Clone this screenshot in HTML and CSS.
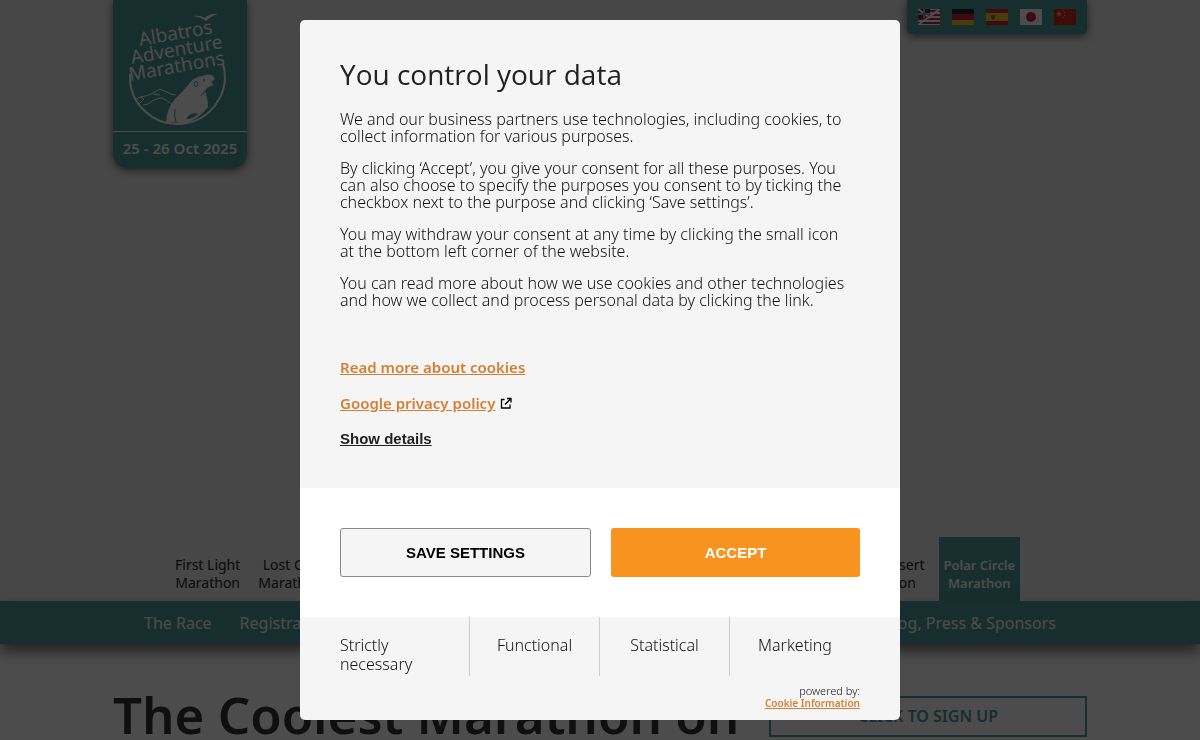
FILE: index.html
```
<!DOCTYPE html>
<html lang="en">
<head>
    <meta charset="UTF-8">
    <title>Polar Circle Marathon</title>
    <link rel="stylesheet" href="styles.css">
</head>
<body>

<header class="hero">
    <div class="top">
        <a class="logo" href="#">
            <svg class="logo-mark" viewBox="0 0 134 131" role="img" aria-label="Albatros Adventure Marathons">
                <path d="M80 16 q8 -1 12 2 q5 -5 13 -4 q-7 2 -12 7 q-5 -4 -13 -5z" fill="#fff"/>
                <path d="M17 74 A47.4 47.4 0 1 0 110 64" fill="none" stroke="#fff" stroke-width="2"/>
                <path d="M22 100 l5 -3 l4 2 l-5 5 z M27 97 q7 -1 11 -3 l9 -5 q7 3 11 5 l5 1 M30 105 q6 0 9 -4 q7 -3 10 -3 q4 2 10 6 M40 94 l7 1" fill="none" stroke="#fff" stroke-width="1"/>
                <path d="M53 122 C54 113 56 106 62 99 C68 93 72 89 75 85 C79 79 85 76 90 76 C94 74 98 75 100 76 L102 79 L98 82 L101 85 C97 86 94 87 92 91 C94 96 95 102 95 107 C88 116 80 121 72 123z" fill="#fff"/>
                <path d="M62 109 q-1 7 1 13 M92 91 l-4 5" fill="none" stroke="#4a9b98" stroke-width="1"/>
                <path d="M73 119 q5 -8 12 -5 q-5 5 -12 5z" fill="#4a9b98"/>
                <ellipse cx="83" cy="84" rx="2" ry="2.5" fill="none" stroke="#4a9b98"/>
                <circle cx="91" cy="80" r="1" fill="#4a9b98"/>
                <g class="logo-text">
                    <text x="27" y="46" transform="rotate(-10 27 46)">Albatros</text>
                    <text x="19" y="64" transform="rotate(-10 19 64)">Adventure</text>
                    <text x="17" y="81" transform="rotate(-10 17 81)">Marathons</text>
                </g>
            </svg>
            <span class="logo-date">25 - 26 Oct 2025</span>
        </a>
        <div class="languages">
            <a href="#" aria-label="English">
                <svg viewBox="0 0 22 16"><path fill="#fff" d="M0 0h22v16H0z"/><path d="M11 2h11M11 6h11M0 10h22M0 14h22" stroke="#c8283c" stroke-width="2"/><path fill="#26397c" d="M0 0h12v9H0z"/><path d="M0 0l12 9M0 16L22 0M6 0v9M0 5h12" stroke="#fff" stroke-width="2"/><path d="M6 0v9M0 5h12" stroke="#c8283c"/></svg>
            </a>
            <a href="#" aria-label="Deutsch">
                <svg viewBox="0 0 22 16"><path fill="#222" d="M0 0h22v6H0z"/><path fill="#d8202c" d="M0 5h22v6H0z"/><path fill="#f5c92b" d="M0 11h22v5H0z"/></svg>
            </a>
            <a href="#" aria-label="Español">
                <svg viewBox="0 0 22 16"><path fill="#cf2630" d="M0 0h22v16H0z"/><path fill="#f5c92b" d="M0 4h22v8H0z"/><path fill="#b5502c" d="M5 6h4v3l-2 2-2-2z"/></svg>
            </a>
            <a href="#" aria-label="日本語">
                <svg viewBox="0 0 22 16"><path fill="#fff" d="M0 0h22v16H0z"/><circle cx="11" cy="8" r="5" fill="#d41f3a"/></svg>
            </a>
            <a href="#" aria-label="中文">
                <svg viewBox="0 0 22 16"><path fill="#d8261f" d="M0 0h22v16H0z"/><path fill="#f5d32b" d="M5 2l1 2h2L6 5l1 3-2-2-2 2 1-3-2-1h2z"/><path fill="#f5d32b" d="M9 1h1v1H9zM10 3h1v1h-1zM10 6h1v1h-1zM9 8h1v1H9z"/></svg>
            </a>
        </div>
    </div>
    <nav class="events">
        <div class="group">
            <a href="#">First Light<br>Marathon</a>
            <a href="#">Lost City<br>Marathon</a>
        </div>
        <div class="group">
            <a href="#">Petra Desert<br>Marathon</a>
            <a class="active" href="#">Polar Circle<br>Marathon</a>
        </div>
    </nav>
</header>

<nav class="menu">
    <div class="group">
        <a href="#">The Race</a>
        <a href="#">Registration</a>
    </div>
    <div class="group">
        <a href="#">Blog, Press &amp; Sponsors</a>
    </div>
</nav>

<main class="content">
    <h1>The Coolest Marathon on</h1>
    <a class="signup" href="#">CLICK TO SIGN UP</a>
</main>

<div class="overlay">
    <div class="dialog" role="dialog" aria-labelledby="dialogTitle">
        <div class="dialog-body">
            <h2 id="dialogTitle">You control your data</h2>
            <p>We and our business partners use technologies, including cookies, to<br>collect information for various purposes.</p>
            <p>By clicking ‘Accept’, you give your consent for all these purposes. You<br>can also choose to specify the purposes you consent to by ticking the<br>checkbox next to the purpose and clicking ‘Save settings’.</p>
            <p>You may withdraw your consent at any time by clicking the small icon<br>at the bottom left corner of the website.</p>
            <p>You can read more about how we use cookies and other technologies<br>and how we collect and process personal data by clicking the link.</p>
            <div class="links">
                <a href="#">Read more about cookies</a>
                <div class="external-link">
                    <a href="#">Google privacy policy</a>
                    <svg class="external" viewBox="0 0 12 12" fill="none" stroke="#000" stroke-width="1.3"><path d="M4.5 2.5H1.5v8.500h8.500V7.500M7 1.500h4v4M11 1.500L5 7.500"/></svg>
                </div>
                <button class="details">Show details</button>
            </div>
        </div>
        <div class="actions">
            <button class="save">SAVE SETTINGS</button>
            <button class="accept">ACCEPT</button>
        </div>
        <div class="dialog-footer">
            <div class="categories">
                <div>Strictly necessary</div>
                <div>Functional</div>
                <div>Statistical</div>
                <div>Marketing</div>
            </div>
            <div class="powered">
                powered by:
                <a href="#">Cookie Information</a>
            </div>
        </div>
    </div>
</div>

</body>
</html>
```
FILE: styles.css
```
* {
    box-sizing: border-box;
}

body {
    font-family: "Noto Sans", "Open Sans", sans-serif;
    background: #fff;
    margin: 0;
    height: 100vh;
    overflow: hidden;
}

a {
    color: inherit;
    text-decoration: none;
}

button {
    cursor: pointer;
}

.hero {
    background: #ededed;
    height: 601px;
    padding: 0 113px;
    display: flex;
    flex-direction: column;
    justify-content: space-between;
}

.top {
    display: flex;
    justify-content: space-between;
    align-items: flex-start;
}

.logo {
    width: 134px;
    background: #4a9b98;
    border-radius: 0 0 15px 15px;
    box-shadow: 0 2px 8px rgba(0,0,0,0.6);
    color: white;
    text-align: center;
}

.logo-mark {
    display: block;
    width: 100%;
}

.logo-text {
    font-size: 19px;
    fill: white;
}

.logo-date {
    display: block;
    border-top: 1px solid white;
    padding: 5px 0 8px;
    font-size: 15px;
    font-weight: 600;
    line-height: 23px;
    white-space: nowrap;
}

.languages {
    display: flex;
    gap: 12px;
    padding: 9px 11px;
    background: #4a9b98;
    border-radius: 0 0 5px 5px;
    box-shadow: 0 2px 8px rgba(0,0,0,0.6);
}

.languages svg {
    display: block;
    width: 22px;
    height: 16px;
}

.events,
.menu {
    display: flex;
    justify-content: space-between;
}

.group {
    display: flex;
}

.events {
    padding: 0 67px 0 58px;
    color: #222;
    font-size: 14px;
    line-height: 18px;
    text-align: center;
}

.events a {
    padding: 19px 4px 9px;
}

.events .group {
    gap: 10px;
}

.events .active {
    padding: 19px 5px 9px;
    background: #4a9b98;
    color: white;
    font-size: 13px;
    font-weight: 600;
}

.menu {
    position: relative;
    background: #4a9b98;
    color: white;
    padding: 1px 144px 0;
    font-size: 16px;
    line-height: 42px;
    box-shadow: 0 8px 12px rgba(0,0,0,0.5);
}

.menu .group {
    gap: 28px;
}

.content {
    display: flex;
    justify-content: space-between;
    align-items: flex-start;
    padding: 38px 113px 0;
}

h1 {
    margin: 0;
    font-size: 51px;
    line-height: 64px;
    font-weight: 600;
    color: #333;
    white-space: nowrap;
}

.signup {
    width: 318px;
    margin-top: 14px;
    border: 2px solid #4a9b98;
    color: #4a9b98;
    font-size: 16px;
    font-weight: 600;
    line-height: 37px;
    text-align: center;
}

.overlay {
    position: fixed;
    inset: 0;
    display: flex;
    align-items: center;
    justify-content: center;
    background: rgba(0,0,0,0.7);
}

.dialog {
    width: 600px;
    max-width: 100%;
    background: #f5f5f5;
    border-radius: 5px;
    overflow: hidden;
    color: #111;
    font-family: "Noto Sans", "Open Sans", sans-serif;
    font-weight: 300;
}

.dialog-body {
    padding: 35px 40px 37px;
    font-size: 16px;
}

h2 {
    margin: 0 0 18px;
    font-family: "Open Sans", "Noto Sans", sans-serif;
    font-size: 28px;
    line-height: 38px;
    font-weight: 400;
    color: #222;
}

p {
    margin: 0 0 15px;
    line-height: 17px;
}

.links {
    display: flex;
    flex-direction: column;
    align-items: flex-start;
    gap: 12px;
    margin-top: 46px;
    font-size: 15px;
    line-height: 24px;
}

.links a,
.powered a {
    color: #d67f33;
    font-weight: 600;
    text-decoration: underline;
}

.external-link {
    display: flex;
    align-items: center;
    gap: 5px;
}

.external {
    width: 12px;
    height: 12px;
}

.details {
    border: none;
    background: none;
    padding: 0;
    font: bold 15px/24px "Liberation Sans", Arial, sans-serif;
    color: #222;
    text-decoration: underline;
}

.actions {
    display: flex;
    gap: 20px;
    padding: 40px;
    background: white;
}

.actions button {
    flex: 1;
    height: 49px;
    border-radius: 3px;
    font: bold 15px "Liberation Sans", Arial, sans-serif;
}

.save {
    background: #f5f5f5;
    border: 1px solid #888;
    color: #000;
}

.accept {
    background: #f7931e;
    border: none;
    color: white;
}

.dialog-footer {
    padding: 0 40px 10px;
}

.categories {
    display: grid;
    grid-template-columns: repeat(4, 1fr);
    font-size: 16px;
    line-height: 19px;
}

.categories div {
    height: 59px;
    padding-top: 19px;
    text-align: center;
    border-right: 1px solid #ccc;
}

.categories div:first-child {
    padding-right: 40px;
    text-align: left;
}

.categories div:last-child {
    border-right: none;
}

.powered {
    display: flex;
    flex-direction: column;
    align-items: flex-end;
    padding-top: 8px;
    font-size: 11px;
    line-height: 13px;
}

.powered a {
    font-size: 10px;
}
```
